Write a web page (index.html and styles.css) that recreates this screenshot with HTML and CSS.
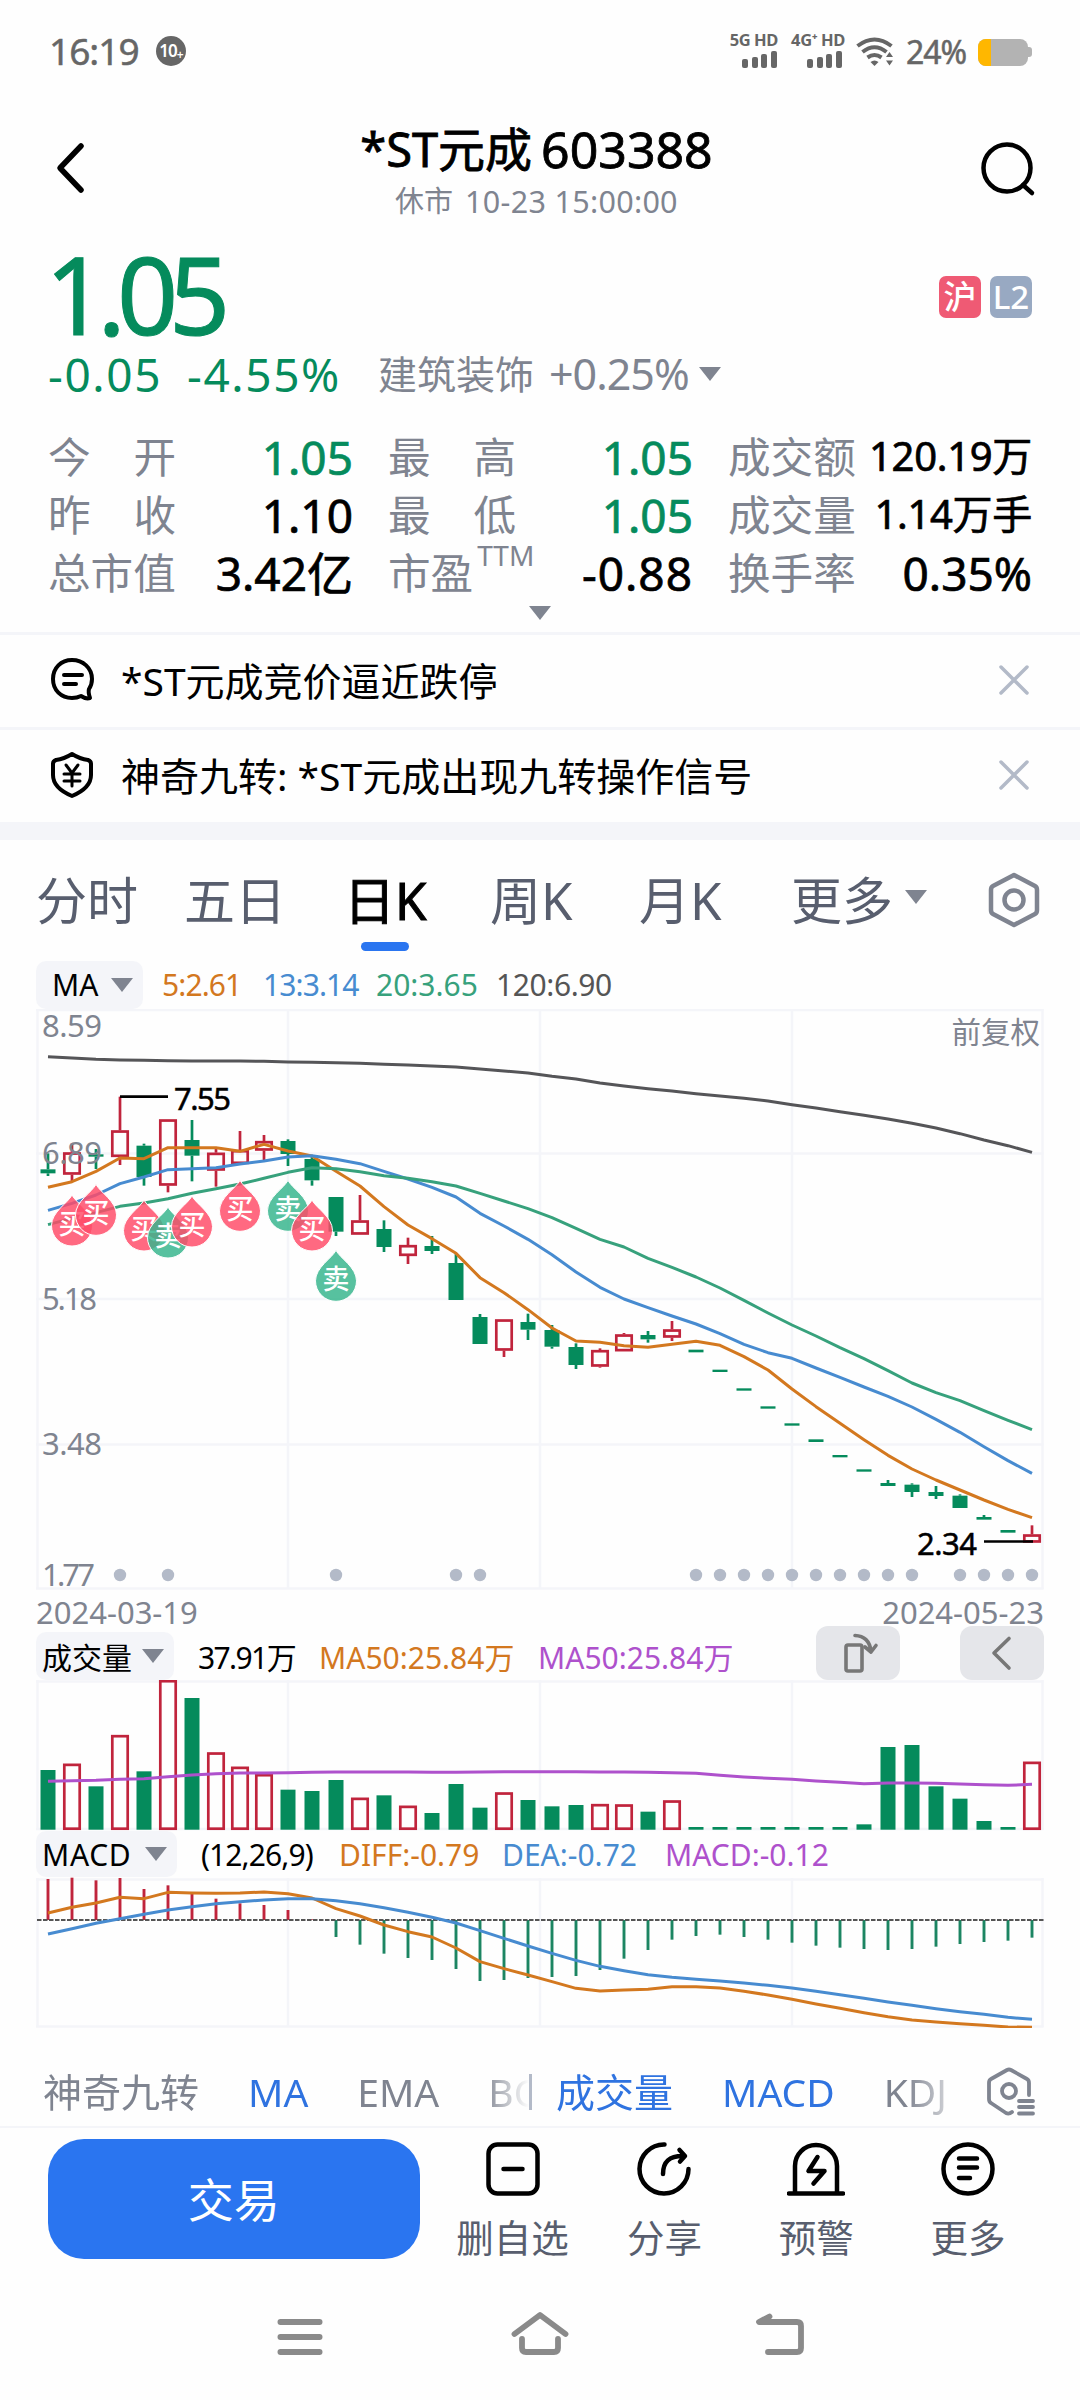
FILE: index.html
```html
<!DOCTYPE html>
<html lang="zh-CN">
<head>
<meta charset="utf-8">
<title>*ST元成 603388</title>
<link rel="stylesheet" href="styles.css">
</head>
<body>
<div class="status">
  <div class="clock">16:19</div>
  <div class="badge10">10<sub>+</sub></div>
  <div class="spacer"></div>
  <div class="sim"><span>5G HD</span>
    <svg width="36" height="17" viewBox="0 0 36 17"><g fill="#666"><rect x="0" y="8" width="6" height="9" rx="2"/><rect x="10" y="6" width="6" height="11" rx="2"/><rect x="19" y="3" width="6" height="14" rx="2"/><rect x="29" y="0" width="6" height="17" rx="2"/></g></svg></div>
  <div class="sim sim2"><span>4G⁺ HD</span>
    <svg width="38" height="17" viewBox="0 0 38 17"><g fill="#666"><rect x="0" y="8" width="6" height="9" rx="2"/><rect x="10" y="6" width="6" height="11" rx="2"/><rect x="19" y="3" width="6" height="14" rx="2"/><rect x="29" y="0" width="6" height="17" rx="2"/></g></svg></div>
  <svg class="wifi" width="38" height="30" viewBox="0 0 38 30"><g fill="none" stroke="#666" stroke-width="4"><path d="M1.500 9Q18.500-4 35.500 9"/><path d="M6.500 15Q18.500 5.500 30.500 15"/><path d="M11.500 20.500Q18.500 15.500 25.500 20.500"/></g><path d="M18.500 29l-4-4q4-3 8 0zM33.500 15l3.500 5h-7zM33.500 28.500l3.500-5h-7z" fill="#666"/></svg>
  <div class="pct">24%</div>
  <div class="battery"><i></i></div><div class="nub"></div>
</div>

<header class="head">
  <svg width="40" height="54" viewBox="0 0 40 54"><path d="M32 5L11 27L32 49" fill="none" stroke="#000" stroke-width="5.500" stroke-linecap="round" stroke-linejoin="round"/></svg>
  <div class="heading"><h1><span>*ST元成</span><span class="code">603388</span></h1><p>休市<span>10-23 15:00:00</span></p></div>
  <svg width="56" height="56" viewBox="0 0 56 56"><g fill="none" stroke="#000" stroke-width="4.500" stroke-linecap="round"><circle cx="27" cy="27" r="23.500"/><path d="M43 44L52 52"/></g></svg>
</header>

<section class="quote">
  <div class="priceline"><div class="price">1.05</div><div class="tags"><b class="hu">沪</b><b class="l2">L2</b></div></div>
  <div class="change"><span class="chg">-0.05</span><span class="pc">-4.55%</span><span class="sector">建筑装饰</span><span class="spc">+0.25%</span><i class="tri"></i></div>
  <div class="stats">
    <label><span>今</span><span>开</span></label><em class="g">1.05</em><label><span>最</span><span>高</span></label><em class="g">1.05</em><label>成交额</label><em class="sm">120.19万</em>
    <label><span>昨</span><span>收</span></label><em>1.10</em><label><span>最</span><span>低</span></label><em class="g">1.05</em><label>成交量</label><em class="sm">1.14万手</em>
    <label>总市值</label><em>3.42亿</em><label class="pe">市盈<sup>TTM</sup></label><em class="neg">-0.88</em><label>换手率</label><em>0.35%</em>
  </div>
  <div class="expand"><i class="tri"></i></div>
</section>

<div class="notice">
  <svg width="44" height="46" viewBox="0 0 44 46"><g fill="none" stroke="#000" stroke-width="4" stroke-linecap="round" stroke-linejoin="round"><path d="M22 3C11 3 3 11 3 22s8 19 19 19c4 0 7-1 9-2 3 2 6 3 9 2-1-3-2-6-1-9 2-3 3-6 3-10C42 11 33 3 22 3z"/><path d="M14 18h18M14 27h12"/></g></svg>
  <span>*ST元成竞价逼近跌停</span>
  <svg class="x" width="32" height="32" viewBox="0 0 32 32"><path d="M3 3L29 29M29 3L3 29" stroke="#b3bac8" stroke-width="3.500" stroke-linecap="round"/></svg>
</div>
<div class="notice second">
  <svg width="44" height="48" viewBox="0 0 44 48"><g fill="none" stroke="#000" stroke-width="4" stroke-linecap="round" stroke-linejoin="round"><path d="M22 3Q30 8 38 9Q41 10 41 13V24Q41 37 22 45Q3 37 3 24V13Q3 10 6 9Q14 8 22 3z"/><path d="M16 14l6 8l6-8M14 23h16M14 30h16M22 22v13" stroke-width="3"/></g></svg>
  <span>神奇九转: *ST元成出现九转操作信号</span>
  <svg class="x" width="32" height="32" viewBox="0 0 32 32"><path d="M3 3L29 29M29 3L3 29" stroke="#b3bac8" stroke-width="3.500" stroke-linecap="round"/></svg>
</div>
<div class="band"></div>

<nav class="tabs">
  <span>分时</span><span>五日</span><span class="on">日K</span><span>周K</span><span>月K</span><span class="more">更多<i class="tri"></i></span>
  <svg width="54" height="56" viewBox="0 0 54 56"><g fill="none" stroke="#7f8490" stroke-width="4.500" stroke-linejoin="round"><path d="M27 3L48 14Q50 15 50 18V38Q50 41 48 42L27 53L6 42Q4 41 4 38V18Q4 15 6 14z"/><circle cx="27" cy="28" r="9.500"/></g></svg>
</nav>

<div class="legend ma">
  <span class="pill">MA<i class="tri"></i></span><span class="o">5:2.61</span><span class="b">13:3.14</span><span class="t">20:3.65</span><span class="k">120:6.90</span>
</div>
<svg class="chart" id="kline" width="1080" height="581" viewBox="0 1009 1080 581"></svg>
<div class="dates"><span>2024-03-19</span><span>2024-05-23</span></div>
<div class="legend vol">
  <span class="pill">成交量<i class="tri"></i></span><span class="k0">37.91万</span><span class="o">MA50:25.84万</span><span class="p">MA50:25.84万</span>
  <div class="btns">
    <span><svg width="84" height="54" viewBox="0 0 84 54"><g fill="none" stroke="#777" stroke-width="3.600" stroke-linecap="round" stroke-linejoin="round"><rect x="30" y="19" width="16" height="26" rx="2"/><path d="M39 9.500Q53 10 55 25M55 26L60 19.500M55 26L49 21"/></g></svg></span>
    <span><svg width="84" height="54" viewBox="0 0 84 54"><path d="M49 12.500L34 27L49 42" fill="none" stroke="#777" stroke-width="3.600" stroke-linecap="round" stroke-linejoin="round"/></svg></span>
  </div>
</div>
<svg class="chart" id="volume" width="1080" height="151" viewBox="0 1680 1080 151"></svg>
<div class="legend macd">
  <span class="pill">MACD<i class="tri"></i></span><span class="k0">(12,26,9)</span><span class="o">DIFF:-0.79</span><span class="b">DEA:-0.72</span><span class="p">MACD:-0.12</span>
</div>
<svg class="chart" id="macd" width="1080" height="151" viewBox="0 1877 1080 151"></svg>

<div class="indicators">
  <div class="grp g1"><span>神奇九转</span><span class="on">MA</span><span>EMA</span><span>BOLL</span></div>
  <i class="bar"></i>
  <div class="grp g2"><span class="on">成交量</span><span class="on">MACD</span><span>KDJ</span></div>
  <svg width="50" height="50" viewBox="0 0 50 50"><g fill="none" stroke="#7f8490" stroke-width="3.800" stroke-linecap="round" stroke-linejoin="round"><path d="M43 28V16Q43 13 41 12L25 3Q23 2 21 3L5 12Q3 13 3 16V32Q3 35 5 36L20 46Q23 47.500 26 45"/><circle cx="23" cy="24" r="7"/><path d="M33 34h14M33 40h14M33 46.500h14"/></g></svg>
</div>

<footer class="actions">
  <button>交易</button>
  <div class="act"><svg width="58" height="58" viewBox="0 0 58 58"><g fill="none" stroke="#000" stroke-width="4.500" stroke-linecap="round"><rect x="4.500" y="4.500" width="49" height="49" rx="9"/><path d="M19.500 29h19"/></g></svg><span>删自选</span></div>
  <div class="act"><svg width="58" height="58" viewBox="0 0 58 58"><g fill="none" stroke="#000" stroke-width="4.500" stroke-linecap="round" stroke-linejoin="round"><path d="M29.500 4.500A24.500 24.500 0 1 0 53.500 29M28 34C28 22 34 15.500 49 16M44.500 10L50 16L45 21.500"/></g></svg><span>分享</span></div>
  <div class="act"><svg width="58" height="58" viewBox="0 0 58 58"><g fill="none" stroke="#000" stroke-width="4.500" stroke-linecap="round" stroke-linejoin="round"><path d="M8 53V26A21 21 0 0 1 50 26V53M2 53.500H56"/><path d="M30.500 17L21.500 31H37.500L26.500 43.500"/></g></svg><span>预警</span></div>
  <div class="act"><svg width="58" height="58" viewBox="0 0 58 58"><g fill="none" stroke="#000" stroke-width="4.500" stroke-linecap="round"><circle cx="29" cy="29" r="24.500"/><path d="M20 18.500h18M20 27.500h18M20 38h11"/></g></svg><span>更多</span></div>
</footer>
<div class="sysnav">
  <svg width="60" height="46" viewBox="0 0 60 46"><path d="M10.500 11h39M10.500 26h39M10.500 41h39" stroke="#8a8a8a" stroke-width="6" stroke-linecap="round"/></svg>
  <svg width="60" height="46" viewBox="0 0 60 46"><path d="M4.500 23L30 4L55.500 23M12 28V37Q12 41 16 41H44Q48 41 48 37V28" fill="none" stroke="#8a8a8a" stroke-width="5.800" stroke-linecap="round" stroke-linejoin="round"/></svg>
  <svg width="60" height="46" viewBox="0 0 60 46"><path d="M19.500 5.500L9 11H47Q51 11 51 15V37Q51 41 47 41H18" fill="none" stroke="#8a8a8a" stroke-width="5.800" stroke-linecap="round" stroke-linejoin="round"/></svg>
</div>
<script src="chart.js"></script>
</body>
</html>
```
FILE: styles.css
```css
* { box-sizing: border-box; }
body { margin: 0; width: 1080px; height: 2400px; overflow: hidden; background: #fefefe; color: #000; font-family: "Noto Sans", "Noto Sans CJK SC", sans-serif; }
h1, p { margin: 0; font-weight: 400; }
svg { display: block; flex: none; }
span, div, em, label { white-space: nowrap; }
em { font-style: normal; }
.tri { display: inline-block; border: 11px solid transparent; border-top: 14px solid #7f8490; border-bottom: 0; flex: none; }
.spacer { flex: 1; }

.status { height: 104px; padding: 0 48px 0 49px; display: flex; align-items: center; color: #666; }
.clock { font-size: 37px; line-height: 40px; width: 107px; letter-spacing: -1px; margin-top: -2px; -webkit-text-stroke: .5px #666; }
.badge10 { width: 30px; height: 30px; border-radius: 50%; background: #666; color: #fff; font-size: 17px; line-height: 29px; font-weight: 600; letter-spacing: -1px; text-align: center; margin-top: -2px; }
.badge10 sub { font-size: 12px; line-height: 0; vertical-align: -2px; }
.sim { display: flex; flex-direction: column; align-items: flex-end; gap: 3px; width: 48px; margin-top: -4px; font: 700 16.5px/16px "Noto Sans", sans-serif; letter-spacing: -.4px; }
.sim2 { width: 56px; margin-left: 11px; }
.wifi { margin: 0 12px 0 11px; }
.pct { font-size: 32px; width: 66px; line-height: 40px; letter-spacing: -1px; -webkit-text-stroke: .5px #666; }
.battery { width: 50px; height: 27px; border-radius: 8px; background: #b3b3b3; margin-left: 6px; overflow: hidden; }
.battery i { display: block; width: 13px; height: 27px; background: #ffb700; }
.nub { width: 4px; height: 10px; background: #b3b3b3; border-radius: 0 3px 3px 0; }

.head { height: 126px; display: flex; justify-content: space-between; padding: 0 44px 0 49px; }
.head > svg { margin-top: 37px; }
.heading { display: flex; flex-direction: column; align-items: center; padding-left: 4px; }
.heading h1 { display: flex; gap: 9px; font-size: 47px; line-height: 60px; margin-top: 15px; -webkit-text-stroke: .8px #000; }
.heading .code { font-size: 50px; }
.heading p { font-size: 29px; line-height: 40px; color: #7f8490; margin-top: 2px; display: flex; gap: 12px; }
.heading p span { font-size: 30.5px; letter-spacing: .3px; }

.quote { height: 402px; padding: 0 48px; }
.priceline { height: 116px; display: flex; justify-content: space-between; align-items: center; }
.price { font-size: 107px; line-height: 116px; color: #058b5c; letter-spacing: -9px; padding-top: 12px; margin-left: -3px; -webkit-text-stroke: 1px #058b5c; }
.tags { display: flex; gap: 9px; padding-top: 18px; }
.tags b { width: 42px; height: 42px; border-radius: 7px; color: #fff; font-size: 33px; line-height: 41px; text-align: center; font-weight: 500; }
.hu { background: #ef5a74; }
.l2 { background: #98a9c2; }
.change { height: 56px; display: flex; align-items: center; color: #7f8490; font-size: 39px; line-height: 56px; }
.chg, .pc { color: #058b5c; font-size: 46px; letter-spacing: 1.6px; }
.chg { width: 139px; }
.pc { width: 191px; }
.sector { width: 171px; }
.spc { font-size: 43px; width: 150px; letter-spacing: -1px; }
.stats { display: grid; grid-template-columns: 128px 212px 128px 212px 128px 176px; grid-auto-rows: 58px; margin-top: 26px; line-height: 58px; }
.stats label { font-size: 42.6px; color: #7f8490; display: flex; justify-content: space-between; }
.stats label, .pe { line-height: 57px; }
.stats em { font-size: 46px; text-align: right; -webkit-text-stroke: .7px currentColor; }
.stats em:nth-child(6n+2), .stats em:nth-child(6n+4) { padding-right: 35px; }
.stats em.sm { font-size: 40px; line-height: 56px; letter-spacing: -.3px; }
.stats em.neg { letter-spacing: 1px; }
.stats .g { color: #058b5c; }
.stats .pe { justify-content: flex-start; }
.pe sup { font-size: 28px; line-height: 30px; margin: -4px 0 0 4px; }
.expand { display: flex; justify-content: center; padding-top: 1px; height: 20px; align-items: center; }

.notice { height: 95px; border-top: 3px solid #f4f5f9; padding: 0 50px 2px; display: flex; align-items: center; gap: 27px; font-size: 39px; }
.notice span { margin-top: -2px; }
.notice .x { margin-left: auto; }
.band { height: 18px; background: #f4f5f9; }

.tabs { height: 120px; padding: 22px 39px 0 36px; display: grid; grid-template-columns: 148px 160px 146px 149px 152px 1fr 54px; align-items: start; font-size: 51px; line-height: 76px; color: #585e6e; }
.tabs span { position: relative; justify-self: start; }
.tabs .on { color: #000; -webkit-text-stroke: 1px #000; }
.tabs .on::after { content: ""; position: absolute; left: 50%; margin-left: -24px; bottom: -13px; width: 48px; height: 9px; border-radius: 5px; background: #2a75f0; }
.tabs .more { display: flex; }
.tabs .more .tri { margin: 28px 0 0 12px; }
.tabs svg { margin-top: 10px; }

.legend { display: flex; align-items: center; height: 48px; padding-left: 36px; font-size: 30px; }
.legend.ma { height: 49px; }
.pill { height: 48px; background: #f4f5f9; border-radius: 10px; display: flex; align-items: center; justify-content: space-between; padding: 0 10px 0 6px; flex: none; }
.ma .pill { width: 107px; padding-left: 16px; margin-right: 19px; }
.ma .o { width: 101px; letter-spacing: -.9px; }
.ma .b { width: 113px; letter-spacing: -.9px; }
.ma .t { width: 120px; }
.ma .k { letter-spacing: -.4px; }
.vol .pill { width: 138px; margin-right: 24px; }
.vol .k0 { width: 121px; letter-spacing: -1.6px; }
.vol .o { width: 219px; }
.macd .pill { width: 141px; height: 46px; margin-right: 24px; letter-spacing: .7px; }
.macd .k0 { width: 138px; letter-spacing: -.9px; }
.macd .o, .macd .b { width: 163px; }
.macd { height: 46px; }
.o { color: #d3781f; } .b { color: #478bd0; } .t { color: #37a17c; } .k { color: #555; } .p { color: #ae51cc; }
.dates { height: 42px; padding: 2px 36px 0; display: flex; justify-content: space-between; font-size: 31px; line-height: 41px; color: #7f8490; }
.btns { display: flex; gap: 60px; margin-left: auto; padding-right: 36px; margin-top: -6px; }
.btns span { background: #e5e6ea; border-radius: 12px; }
.chart { font-family: "Noto Sans", "Noto Sans CJK SC", sans-serif; }

.indicators { height: 100px; display: flex; align-items: center; padding: 30px 43px 0 43px; font-size: 39px; color: #7f8490; border-bottom: 2px solid #f4f5f9; }
.grp { display: flex; gap: 49px; overflow: hidden; line-height: 60px; }
.grp .on { color: #2f73e0; }
.g1 { width: 486px; -webkit-mask-image: linear-gradient(90deg, #000 440px, transparent 486px); mask-image: linear-gradient(90deg, #000 440px, transparent 486px); }
.bar { width: 3px; height: 36px; background: #b3bac8; margin-right: 24px; }
.g2 { width: 404px; margin-right: 26px; -webkit-mask-image: linear-gradient(90deg, #000 350px, transparent 415px); mask-image: linear-gradient(90deg, #000 350px, transparent 415px); }

.actions { display: flex; height: 140px; padding: 11px 36px 0 48px; }
.actions button { width: 372px; height: 120px; border: 0; border-radius: 36px; background: #2a75f0; color: #fff; font: 400 46px "Noto Sans CJK SC", sans-serif; margin-right: 17px; padding: 0 0 4px; }
.act { width: 152px; display: flex; flex-direction: column; align-items: center; font-size: 37.500px; color: #585e6e; line-height: 50px; gap: 15px; }
.act svg { margin-top: 1px; }
.sysnav { height: 132px; padding: 43px 270px 0; display: flex; justify-content: space-between; }
```
FILE: chart.js
```js
const X = i => 48 + 24 * i;
const RED = '#c0243c', GREEN = '#058b5c', GRID = '#f4f5f9';
const line = (x1, y1, x2, y2, c, w, extra = '') => `<line x1="${x1}" y1="${y1}" x2="${x2}" y2="${y2}" stroke="${c}" stroke-width="${w}" ${extra}/>`;
const poly = (ys, c, w = 3) => `<polyline fill="none" stroke="${c}" stroke-width="${w}" stroke-linejoin="round" points="${ys.map((y, i) => y === null ? '' : X(i) + ',' + y).join(' ')}"/>`;
const third = (base, s) => s.trim().split(/\s+/).map(v => base + v / 3);
const vgrid = (t, b) => [37.5, 288, 540, 792, 1042.5].map(x => line(x, t, x, b, GRID, 2.5)).join('');
const hgrid = ys => ys.map(y => line(36, y, 1043.5, y, GRID, 2.5)).join('');
const text = (x, y, s, c, size, anchor = 'start', extra = '') => `<text x="${x}" y="${y}" fill="${c}" font-size="${size}" text-anchor="${anchor}" ${extra}>${s}</text>`;

// type, body top, body bottom, high, low
const candles = `g 508 520 460 528|r 457 524 430 545|g 463 470 447 507|r 391 471 290 495|g 437 531 431 557|r 358 557 358 577|g 420 467 360 544|r 458 512 445 560|r 450 492 393 492|r 423 452 405 482|g 423 462 418 498|g 477 541 465 557|g 591 695 591 708|r 661 704 585 704|g 687 741 661 756|r 735 768 713 792|g 738 753 708 762|g 789 900 760 900|g 951 1032 942 1032|r 958 1052 958 1071|g 966 989 941 1020|g 990 1040 975 1046|g 1041 1095 1030 1107|r 1050 1100 1045 1103|r 1003 1054 999 1054|g 1005 1018 993 1028|r 988 1013 963 1023|g 1049 1057 1049 1057|g 1109 1116 1109 1116|g 1165 1172 1165 1172|g 1219 1226 1219 1226|g 1270 1277 1270 1277|g 1318 1326 1318 1326|g 1365 1372 1365 1372|g 1408 1415 1408 1415|g 1449 1458 1440 1458|g 1454 1476 1450 1491|g 1476 1488 1458 1497|g 1487 1524 1483 1524|g 1551 1559 1545 1559|g 1590 1598 1590 1598|r 1603 1628 1576 1628`
  .split('|').map(r => { const a = r.split(' '); return [a[0], ...a.slice(1).map(v => 1000 + v / 3)]; });

let k = vgrid(1009, 1589) + hgrid([1010, 1153.5, 1299, 1444.5, 1588.5]);
candles.forEach(([t, top, bot, hi, lo], i) => {
  const x = X(i), c = t === 'r' ? RED : GREEN;
  if (hi < top) k += line(x, hi, x, top, c, 2.7);
  if (lo > bot) k += line(x, bot, x, lo, c, 2.7);
  k += t === 'r'
    ? `<rect x="${x - 7.7}" y="${top + 1.2}" width="15.4" height="${bot - top - 2.4}" fill="none" stroke="${c}" stroke-width="2.7"/>`
    : `<rect x="${x - 7.5}" y="${top}" width="15" height="${bot - top}" fill="${c}"/>`;
});
k += poly(third(1000, '170 174 178 180 181 182 183 183 183 184 186 187 188 190 193 195 198 201 207 213 219 229 237 249 258 266 273 281 288 295 303 314 324 335 346 357 370 384 401 420 437 457'), '#555558', 3);
k += poly(third(1000, '562 545 514 474 476 443 443 443 454 433 453 468 514 558 620 675 716 760 833 878 929 984 1023 1027 1037 1042 1033 1024 1036 1070 1110 1167 1220 1270 1319 1366 1407 1440 1470 1500 1528 1553'), '#d3781f');
k += poly(third(1000, '631 610 585 551 531 509 506 503 492 483 471 467 478 491 514 537 562 591 640 678 718 764 816 862 897 923 948 972 1001 1033 1058 1075 1104 1132 1161 1189 1221 1258 1297 1340 1382 1420'), '#478bd0');
k += poly(third(1000, '674 655 638 619 609 596 580 566 552 535 517 503 506 515 527 535 545 558 580 603 626 653 685 718 741 775 802 831 864 901 939 975 1008 1043 1076 1112 1149 1178 1202 1232 1261 1289'), '#37a17c');
const mark = 'stroke="#000" stroke-width=".5"';
k += line(120, 1096.7, 168, 1096.7, '#000', 2.7) + text(174, 1110, '7.55', '#000', 31, 'start', 'textLength="57" ' + mark);
k += line(984, 1541.5, 1033, 1541.5, '#000', 2.7) + text(917, 1555, '2.34', '#000', 31, 'start', 'textLength="60" ' + mark);
[[1, 585, 0], [2, 553, 0], [4, 600, 0], [5, 621, 1], [6, 588, 0], [8, 541, 0], [10, 541, 1], [11, 600, 0], [12, 751, 1]].forEach(([i, tip, sell]) => {
  const x = X(i), y = 1000 + tip / 3;
  k += `<path d="M${x} ${y}C${x + 4} ${y + 8} ${x + 20.5} ${y + 17} ${x + 20.5} ${y + 30.5}A20.5 20.5 0 0 1 ${x - 20.5} ${y + 30.5}C${x - 20.5} ${y + 17} ${x - 4} ${y + 8} ${x} ${y}Z" fill="${sell ? '#35b48c' : '#ff4b67'}" fill-opacity=".83" stroke="#fff" stroke-width="1"/>`;
  k += text(x, y + 38.5, sell ? '卖' : '买', '#fff', 27, 'middle', 'font-weight="500"');
});
[3, 5, 12, 17, 18, 27, 28, 29, 30, 31, 32, 33, 34, 35, 36, 38, 39, 40, 41].forEach(i => k += `<circle cx="${X(i)}" cy="1575" r="6.2" fill="#b3bac8"/>`);
[['8.59', 1037, 60], ['6.89', 1164, 60], ['5.18', 1310, 55], ['3.48', 1455, 60], ['1.77', 1586, 53]].forEach(([s, y, w]) => k += text(42, y, s, '#7f8490', 31, 'start', `textLength="${w}"`));
k += text(1040, 1043, '前复权', '#7f8490', 29.5, 'end');
document.getElementById('kline').innerHTML = k;

const vols = third(1560, '630 611 679 525 634 360 414 577 620 642 689 693 660 713 706 737 759 672 743 697 720 739 735 732 733 755 721 801 801 801 801 801 801 801 793 561 555 679 716 783 801 605');
const volRed = [1, 3, 5, 7, 8, 9, 13, 15, 19, 23, 24, 26, 41];
let v = vgrid(1680, 1830) + hgrid([1681.5, 1829]);
vols.forEach((y, i) => {
  const x = X(i);
  v += volRed.includes(i)
    ? `<rect x="${x - 7.7}" y="${y + 1.2}" width="15.4" height="${1827.5 - y}" fill="none" stroke="${RED}" stroke-width="2.7"/>`
    : `<rect x="${x - 7.5}" y="${y}" width="15" height="${1829.7 - y}" fill="${GREEN}"/>`;
});
v += poly(third(1560, '664 662 661 658 656 650 645 641 639 639 638 637 636 636 636 636 637 637 636 635 635 635 635 636 636 637 638 640 646 651 655 658 663 667 671 669 669 670 672 674 676 673'), '#ae51cc');
document.getElementById('volume').innerHTML = v;

let m = vgrid(1878, 2027) + hgrid([1879.5, 2026.5]);
third(1560, '957 953 961 954 987 976 1002 1016 1030 1035 1050 1078 1131 1154 1181 1194 1200 1227 1263 1260 1254 1251 1248 1230 1196 1170 1139 1128 1124 1131 1139 1148 1157 1163 1167 1170 1167 1160 1152 1146 1142 1133')
  .forEach((y, i) => m += line(X(i), 1920, X(i), y, i < 12 ? RED : '#1c8562', 2.9));
m += line(37, 1920, 1044, 1920, '#555', 1.8, 'stroke-dasharray="4.5 1.5"');
m += poly(third(1560, '1059 1042 1029 1012 1016 997 999 1000 999 996 1001 1014 1046 1068 1095 1115 1131 1164 1205 1226 1245 1265 1285 1293 1290 1288 1280 1280 1284 1294 1305 1318 1332 1345 1358 1370 1380 1386 1391 1396 1401 1402'), '#d3781f');
m += poly(third(1560, '1122 1106 1090 1076 1063 1050 1040 1031 1025 1020 1016 1016 1022 1031 1043 1057 1072 1089 1112 1135 1158 1180 1201 1219 1232 1244 1252 1258 1263 1269 1276 1284 1294 1304 1315 1326 1336 1346 1355 1363 1372 1378'), '#478bd0');
document.getElementById('macd').innerHTML = m;
```
